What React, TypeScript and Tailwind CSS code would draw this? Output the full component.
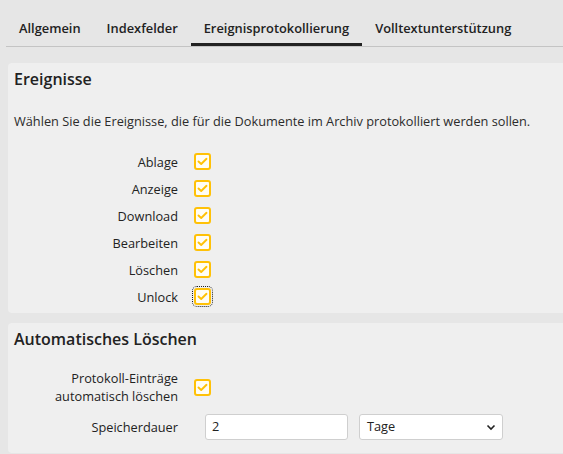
import React from "react";

function Check({ focused = false }: { focused?: boolean }) {
  return (
    <span
      className={
        "flex h-[17px] w-[17px] items-center justify-center rounded-[3px] border-2 border-[#ffc107] bg-[#fffdf5] " +
        (focused ? "outline outline-1 outline-dotted outline-[#222] outline-offset-[1px]" : "")
      }
    >
      <svg width="11" height="9" viewBox="0 0 11 9" fill="none">
        <polyline
          points="1.5,4.5 4.2,7 9.5,1.8"
          stroke="#ffc107"
          strokeWidth="1.9"
          strokeLinecap="round"
          strokeLinejoin="round"
        />
      </svg>
    </span>
  );
}

const tabs = ["Allgemein", "Indexfelder", "Ereignisprotokollierung", "Volltextunterstützung"];
const events = ["Ablage", "Anzeige", "Download", "Bearbeiten", "Löschen", "Unlock"];

export default function App() {
  return (
    <div
      className="h-[454px] w-[563px] overflow-hidden bg-[#e6e6e6] text-[#222]"
      style={{ fontFamily: '"Open Sans", "Liberation Sans", sans-serif' }}
    >
      <div className="ml-[6px] flex border-b border-[#c4c4c4]">
        {tabs.map((t, i) => (
          <div
            key={t}
            className={
              "border-b-[3px] px-[13px] pb-[6px] pt-[19px] text-[12.85px] font-semibold leading-[18px] " +
              (i === 2 ? "border-[#222]" : "border-transparent")
            }
          >
            {t}
          </div>
        ))}
      </div>

      <div className="ml-[8px] mt-[16px] w-[600px] rounded-[4px] bg-[#efefef] pb-[3px] pl-[6px] pt-[4px]">
        <div className="text-[16px] font-semibold leading-[24px]">Ereignisse</div>
        <div className="mt-[21px] text-[12.75px] leading-[18px] text-[#2b2b2b]">
          Wählen Sie die Ereignisse, die für die Dokumente im Archiv protokolliert werden sollen.
        </div>
        <div className="mt-[18px] flex flex-col">
          {events.map((e, i) => (
            <div key={e} className="flex h-[27px] items-center">
              <div className="w-[164px] text-right text-[12.75px] leading-[18px]">{e}</div>
              <div className="ml-[16px]">
                <Check focused={i === events.length - 1} />
              </div>
            </div>
          ))}
        </div>
      </div>

      <div className="ml-[8px] mt-[10px] w-[600px] rounded-[4px] bg-[#efefef] pb-[13px] pl-[6px] pt-[4px]">
        <div className="text-[16px] font-semibold leading-[24px]">Automatisches Löschen</div>
        <div className="mt-[19px] flex items-center">
          <div className="w-[164px] text-right text-[12.75px] leading-[17.5px]">
            Protokoll-Einträge
            <br />
            automatisch löschen
          </div>
          <div className="ml-[16px]">
            <Check />
          </div>
        </div>
        <div className="mt-[9px] flex items-center">
          <div className="w-[164px] text-right text-[12.75px] leading-[18px]">Speicherdauer</div>
          <div className="ml-[27px] flex h-[26px] w-[143px] items-center rounded-[3px] border border-[#cfcfcf] bg-white pl-[6px] text-[12.75px]">
            2
          </div>
          <div className="ml-[11px] flex h-[26px] w-[144px] items-center justify-between rounded-[3px] border border-[#cfcfcf] bg-white pl-[7px] pr-[6px] text-[12.75px]">
            <span>Tage</span>
            <svg width="10" height="7" viewBox="0 0 10 7" fill="none">
              <polyline points="1.5,1.5 5,5 8.5,1.5" stroke="#222" strokeWidth="1.6" />
            </svg>
          </div>
        </div>
      </div>
    </div>
  );
}
